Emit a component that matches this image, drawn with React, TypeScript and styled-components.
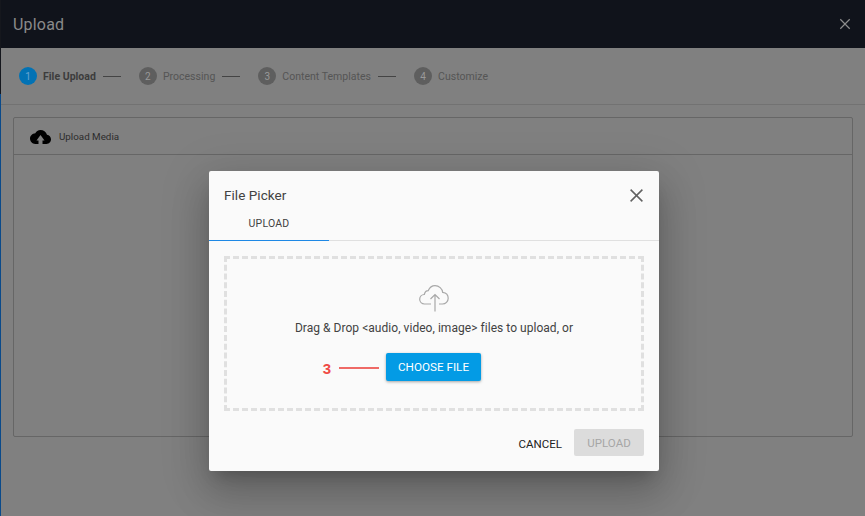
import React from 'react';
import styled, { createGlobalStyle } from 'styled-components';

const GlobalStyle = createGlobalStyle`
	html, body {
		margin: 0;
		padding: 0;
		width: 865px;
		height: 516px;
		overflow: hidden;
		background: #808080;
		font-family: Roboto, "Liberation Sans", sans-serif;
	}
	* {
		box-sizing: border-box;
	}
`;

const Page = styled.div`
	position: relative;
	display: flex;
	width: 865px;
	height: 516px;
	overflow: hidden;
`;

const EdgeStrip = styled.div`
	flex: none;
	width: 1px;
	height: 100%;
	background: linear-gradient(#15171d 0 94px, #0a4a8a 94px);
`;

const Main = styled.div`
	flex: 1;
	display: flex;
	flex-direction: column;
	min-width: 0;
	background: #808080;
`;

const Header = styled.header`
	flex: none;
	display: flex;
	justify-content: space-between;
	align-items: center;
	height: 48px;
	padding: 0 14px 0 12px;
	background: #10131b;
`;

const HeaderTitle = styled.h1`
	margin: 0;
	font-size: 16px;
	font-weight: 400;
	letter-spacing: 0.2px;
	color: #8a8a8a;
`;

const Stepper = styled.ol`
	flex: none;
	display: flex;
	align-items: center;
	height: 57px;
	margin: 0;
	padding: 0 0 0 18px;
	list-style: none;
	border-bottom: 1px solid #727272;
`;

const Step = styled.li`
	display: flex;
	align-items: center;
	margin-right: 18px;
`;

const StepNumber = styled.span<{ $active?: boolean }>`
	display: flex;
	justify-content: center;
	align-items: center;
	width: 18px;
	height: 18px;
	margin-right: 6px;
	border-radius: 50%;
	font-size: 10px;
	color: ${({ $active }) => ($active ? '#6aa5d0' : '#999')};
	background: ${({ $active }) => ($active ? '#0272b4' : '#5e5e5e')};
`;

const StepLabel = styled.span<{ $active?: boolean }>`
	font-size: 10.5px;
	letter-spacing: 0.02px;
	font-weight: ${({ $active }) => ($active ? 700 : 400)};
	color: ${({ $active }) => ($active ? '#3c3c3c' : '#555')};
`;

const StepLine = styled.span`
	width: 18px;
	height: 1px;
	margin-left: 7px;
	background: #444;
`;

const Content = styled.div`
	flex: 1;
	padding: 12px 12px 0;
`;

const MediaPanel = styled.section`
	height: 320px;
	border: 1px solid #666;
	border-radius: 2px;
`;

const MediaHeader = styled.div`
	display: flex;
	align-items: center;
	height: 37px;
	padding: 1px 0 0 16px;
	border-bottom: 1px solid #666;
`;

const MediaTitle = styled.span`
	margin-left: 8px;
	font-size: 9.8px;
	color: #2c2c2c;
`;

const ModalLayer = styled.div`
	position: absolute;
	inset: 0;
	padding: 171px 0 0 209px;
`;

const Dialog = styled.div`
	display: flex;
	flex-direction: column;
	width: 450px;
	height: 300px;
	background: #fafafa;
	border-radius: 2px;
	box-shadow: 0 11px 15px -7px rgba(0, 0, 0, 0.2), 0 24px 38px 3px rgba(0, 0, 0, 0.14),
		0 9px 46px 8px rgba(0, 0, 0, 0.12);
`;

const DialogHeader = styled.div`
	flex: none;
	display: flex;
	justify-content: space-between;
	align-items: center;
	height: 42px;
	padding: 6px 15px 0;
`;

const DialogTitle = styled.h2`
	margin: 0;
	font-size: 13.5px;
	font-weight: 400;
	letter-spacing: 0.05px;
	color: #424242;
`;

const CloseButton = styled.button<{ $dim?: boolean }>`
	display: flex;
	padding: 0;
	border: 0;
	background: none;
	color: ${({ $dim }) => ($dim ? '#8c8c8c' : '#616161')};
`;

const TabBar = styled.div`
	flex: none;
	display: flex;
	height: 28px;
	border-bottom: 1px solid #e0e0e0;
`;

const Tab = styled.div`
	display: flex;
	justify-content: center;
	align-items: center;
	width: 120px;
	height: 28px;
	padding-bottom: 7px;
	font-size: 10.5px;
	letter-spacing: 0.2px;
	color: #424242;
	border-bottom: 1px solid #1e88e5;
`;

const DropZone = styled.div`
	display: flex;
	flex-direction: column;
	align-items: center;
	height: 155px;
	margin: 15px 15px 0;
	padding-top: 26px;
	border: 3px dashed #e0e0e0;
`;

const DropIcon = styled.div`
	display: flex;
	margin-right: 1px;
`;

const DropText = styled.p`
	margin: 8px 0 0;
	font-size: 12px;
	line-height: 16px;
	letter-spacing: 0.04px;
	color: #424242;
`;

const ChooseRow = styled.div`
	position: relative;
	margin: 17px 1px 0 0;
`;

const ChooseButton = styled.button`
	display: block;
	width: 95px;
	height: 28px;
	padding: 0;
	border: 0;
	border-radius: 2px;
	font-family: inherit;
	font-size: 11.7px;
	color: #fff;
	background: #039be5;
	box-shadow: 0 1px 3px rgba(0, 0, 0, 0.35);
`;

const Callout = styled.div`
	position: absolute;
	top: 1px;
	right: 102px;
	display: flex;
	align-items: center;
	height: 28px;
	font-family: "Liberation Sans", Arial, sans-serif;
	font-size: 15px;
	font-weight: 700;
	color: #ef4a45;
`;

const CalloutLine = styled.span`
	width: 40px;
	height: 2px;
	margin-left: 8px;
	background: #ef6a66;
`;

const DialogFooter = styled.div`
	flex: 1;
	display: flex;
	justify-content: flex-end;
	align-items: flex-start;
	gap: 12px;
	padding: 18px 15px 0;
`;

const CancelButton = styled.button`
	height: 29px;
	padding: 0;
	border: 0;
	background: none;
	font-family: inherit;
	font-size: 11.5px;
	color: #212121;
`;

const UploadButton = styled.button`
	width: 70px;
	height: 27px;
	padding: 0;
	border: 0;
	border-radius: 2px;
	font-family: inherit;
	font-size: 11.5px;
	color: #a6a6a6;
	background: #dcdcdc;
`;

const steps = ['File Upload', 'Processing', 'Content Templates', 'Customize'];

function CrossIcon({ size }: { size: number }): JSX.Element {
	return (
		<svg width={size} height={size} viewBox="0 0 14 14" fill="none" stroke="currentColor" strokeWidth="1.4">
			<path d="M1.5 1.5 12.5 12.5M12.5 1.5 1.5 12.5" />
		</svg>
	);
}

function SolidCloudIcon(): JSX.Element {
	return (
		<svg width="21" height="14" viewBox="0 0 21 14">
			<path
				fill="#000"
				d="M10.500 0C8 0 6.200 1.300 5.300 3.300 2.400 3.500 0 5.700 0 8.600 0 11.600 2.300 14 5.200 14H8.500V10.500H6.500L10.500 5 14.500 10.500H12.500V14H16.500C19 14 21 11.900 21 9.300 21 7 19.300 5.100 17 4.700 16 2 13.500 0 10.500 0Z"
			/>
		</svg>
	);
}

function OutlineCloudIcon(): JSX.Element {
	return (
		<svg width="30" height="27" viewBox="0 0 30 27" fill="none" stroke="#a8a8a8" strokeWidth="1.2">
			<path d="M12 19H5.500C2.800 19 .7 17 .7 14.300 .7 11.600 2.800 9.600 5.300 9.500 5.800 7.200 7.500 5.600 9.300 5.600 10.500 2.800 13 .7 16 .7 20 .7 23.300 3.600 23.700 7.400 26.800 7.800 29.200 10 29.200 13.200 29.200 16.500 26.600 19 23.500 19H20" />
			<path d="M16 26.500V9.500M11.500 14 16 9.500 20.500 14" />
		</svg>
	);
}

function App(): JSX.Element {
	return (
		<Page>
			<GlobalStyle />
			<EdgeStrip />
			<Main>
				<Header>
					<HeaderTitle>Upload</HeaderTitle>
					<CloseButton $dim>
						<CrossIcon size={12} />
					</CloseButton>
				</Header>
				<Stepper>
					{steps.map((step, index) => (
						<Step key={step}>
							<StepNumber $active={index === 0}>{index + 1}</StepNumber>
							<StepLabel $active={index === 0}>{step}</StepLabel>
							{index < steps.length - 1 && <StepLine />}
						</Step>
					))}
				</Stepper>
				<Content>
					<MediaPanel>
						<MediaHeader>
							<SolidCloudIcon />
							<MediaTitle>Upload Media</MediaTitle>
						</MediaHeader>
					</MediaPanel>
				</Content>
			</Main>
			<ModalLayer>
				<Dialog>
					<DialogHeader>
						<DialogTitle>File Picker</DialogTitle>
						<CloseButton>
							<CrossIcon size={15} />
						</CloseButton>
					</DialogHeader>
					<TabBar>
						<Tab>UPLOAD</Tab>
					</TabBar>
					<DropZone>
						<DropIcon>
							<OutlineCloudIcon />
						</DropIcon>
						<DropText>{'Drag & Drop <audio, video, image> files to upload, or'}</DropText>
						<ChooseRow>
							<Callout>
								3
								<CalloutLine />
							</Callout>
							<ChooseButton>CHOOSE FILE</ChooseButton>
						</ChooseRow>
					</DropZone>
					<DialogFooter>
						<CancelButton>CANCEL</CancelButton>
						<UploadButton>UPLOAD</UploadButton>
					</DialogFooter>
				</Dialog>
			</ModalLayer>
		</Page>
	);
}

export default App;
